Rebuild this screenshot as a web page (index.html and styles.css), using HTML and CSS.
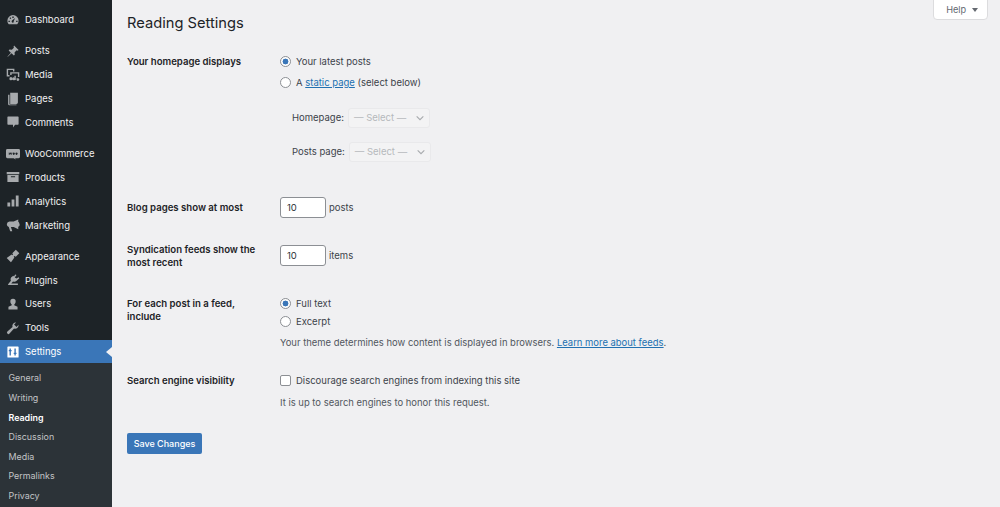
FILE: index.html
```html
<!DOCTYPE html>
<html lang="en">

<head>
    <meta charset="UTF-8">
    <meta name="viewport" content="width=device-width, initial-scale=1.0">
    <title>Reading Settings</title>
    <link rel="stylesheet" href="styles.css">
</head>

<body>
    <aside class="sidebar">
        <ul class="menu">
            <li class="item group"><svg viewBox="0 0 20 20"><path d="M10 3a8 8 0 0 0-8 8c0 2 .7 3.800 2 5.200h12a8 8 0 0 0 2-5.200 8 8 0 0 0-8-8zM9 5h2v2H9zM5 7l1.500-.8 1 1.500L6 8.600zM3.500 11h2v2h-2zm11 0h2v2h-2zM10 14a2 2 0 0 1-1-3.700l4-3.300-2 4.700A2 2 0 0 1 10 14z" fill-rule="evenodd"/></svg>Dashboard</li>

            <li class="item"><svg viewBox="0 0 20 20"><path d="M11.500 2l6.500 6.500-1.500 1-1.300-.5-3 3 .3 3.300-1.300 1.200-3.200-3.200L3 18l-1 .5.500-1 4.500-5-3.200-3.200L5 8l3.300.3 3-3-.5-1.300z"/></svg>Posts</li>
            <li class="item"><svg viewBox="0 0 20 20"><path d="M1 1h11v4h-2V3H3v7h2v2H1zm5 5h13v7h-2V8H8v2H6zm11 8.500a2 2 0 1 1-2 2v-2zM7 13a2.200 2.200 0 1 1-2.200 2.200A2.200 2.200 0 0 1 7 13zm4 4.500a2 2 0 1 1 1-3.700V11h2v6z" fill-rule="evenodd"/></svg>Media</li>
            <li class="item"><svg viewBox="0 0 20 20"><path d="M6 1h11v14a2 2 0 0 1-2 2H6zM3 4h2v14h10v1H5a2 2 0 0 1-2-2z"/></svg>Pages</li>
            <li class="item group"><svg viewBox="0 0 20 20"><path d="M3 2h14a1 1 0 0 1 1 1v10a1 1 0 0 1-1 1h-4l-3 4v-4H3a1 1 0 0 1-1-1V3a1 1 0 0 1 1-1z"/></svg>Comments</li>

            <li class="item"><svg viewBox="0 0 20 20"><path d="M2 3h16a2 2 0 0 1 2 2v9a2 2 0 0 1-2 2h-5l1 2-3-2H2a2 2 0 0 1-2-2V5a2 2 0 0 1 2-2zm2 5v3h1l1-1.500L7 11h1l1-3H8l-.5 1.500L6.500 8h-1l-.6 1.500L4.500 8zm7 0a1.500 1.500 0 1 0 .1 0zm4 0a1.500 1.500 0 1 0 .1 0z" fill-rule="evenodd"/></svg>WooCommerce</li>
            <li class="item"><svg viewBox="0 0 20 20"><path d="M1 3h18v3H1zm1 4h16v10H2zm5 2v1.500h6V9z" fill-rule="evenodd"/></svg>Products</li>
            <li class="item"><svg viewBox="0 0 20 20"><path d="M2 12h4v6H2zm6-4h4v10H8zm6-6h4v16h-4z"/></svg>Analytics</li>
            <li class="item group"><svg viewBox="0 0 20 20"><path d="M19 8a3 3 0 0 0-1.500-2.500V2L11 5H5a4 4 0 0 0-1 7.800L6 19h3l-2-6h4l6.500 3v-3.500A3 3 0 0 0 19 8z"/></svg>Marketing</li>

            <li class="item"><svg viewBox="0 0 20 20"><path d="M14 1l5 5-5 5-2-1-1 1 1 1-4 6-1 1-6-6 1-1 6-4 1 1 1-1-1-2z"/></svg>Appearance</li>
            <li class="item"><svg viewBox="0 0 20 20"><path d="M13 2l2 1-2.500 3.500L15 8l3-2 1 1.500-3 3a5 5 0 0 1-6 1.500l-2.500 3H17v2H3v-1l4-5a5 5 0 0 1 2-6l1.500-1 1 1z"/></svg>Plugins</li>
            <li class="item"><svg viewBox="0 0 20 20"><path d="M10 2.500a3.800 3.800 0 0 1 3.800 4c0 2-1 3.500-2 4.300v1l4.700 2.200V18h-13v-4l4.700-2.200v-1c-1-.8-2-2.300-2-4.300a3.800 3.800 0 0 1 3.800-4z"/></svg>Users</li>
            <li class="item"><svg viewBox="0 0 20 20"><path d="M18 5.500a5 5 0 0 1-6.500 5.200L5 18a2 2 0 0 1-3-3l7.300-6.500A5 5 0 0 1 14.500 2L11.500 5l3.500 3.500z"/></svg>Tools</li>
            <li class="item current"><svg viewBox="0 0 20 20"><path d="M3 2h14a1 1 0 0 1 1 1v14a1 1 0 0 1-1 1H3a1 1 0 0 1-1-1V3a1 1 0 0 1 1-1zm2 3v2H4v2h1v6h2V9h1V7H7V5zm7 0v6h-1v2h1v2h2v-2h1v-2h-1V5z" fill-rule="evenodd"/></svg>Settings</li>
        </ul>
        <ul class="submenu">
            <li>General</li>
            <li>Writing</li>
            <li class="active">Reading</li>
            <li>Discussion</li>
            <li>Media</li>
            <li>Permalinks</li>
            <li>Privacy</li>
        </ul>
    </aside>

    <main class="content">
        <button class="help" type="button">Help <span class="help-arrow"></span></button>
        <h1>Reading Settings</h1>

        <form class="settings">
            <div class="row row-home">
                <div class="label">Your homepage displays</div>
                <div class="field">
                    <label class="check"><input type="radio" name="home" checked>Your latest posts</label>
                    <label class="check"><input type="radio" name="home"><span>A <a href="#">static page</a> (select below)</span></label>
                    <div class="page-select first">
                        <span>Homepage:</span>
                        <div class="select">— Select — <svg viewBox="0 0 12 12"><path d="M2 4l4 4 4-4"/></svg></div>
                    </div>
                    <div class="page-select">
                        <span>Posts page:</span>
                        <div class="select">— Select — <svg viewBox="0 0 12 12"><path d="M2 4l4 4 4-4"/></svg></div>
                    </div>
                </div>
            </div>

            <div class="row row-blog">
                <div class="label">Blog pages show at most</div>
                <div class="field inline"><input class="number" type="text" value="10"> posts</div>
            </div>

            <div class="row row-feeds">
                <div class="label">Syndication feeds show the most recent</div>
                <div class="field inline"><input class="number" type="text" value="10"> items</div>
            </div>

            <div class="row row-include">
                <div class="label">For each post in a feed, include</div>
                <div class="field">
                    <label class="check"><input type="radio" name="feed" checked>Full text</label>
                    <label class="check"><input type="radio" name="feed">Excerpt</label>
                    <p class="note">Your theme determines how content is displayed in browsers. <a href="#">Learn more about feeds</a>.</p>
                </div>
            </div>

            <div class="row row-search">
                <div class="label">Search engine visibility</div>
                <div class="field">
                    <label class="check"><input type="checkbox">Discourage search engines from indexing this site</label>
                    <p class="note">It is up to search engines to honor this request.</p>
                </div>
            </div>

            <button class="save" type="button">Save Changes</button>
        </form>
    </main>
</body>

</html>
```

FILE: styles.css
```css
* {
    box-sizing: border-box;
}

html,
body {
    height: 507px;
    overflow: hidden;
}

body {
    display: flex;
    margin: 0;
    background-color: #f0f0f2;
    color: #3c434a;
    font-family: Inter, "Liberation Sans", sans-serif;
    font-size: 9.5px;
}

a {
    color: #2271b1;
}

.sidebar {
    width: 112px;
    flex-shrink: 0;
    background-color: #1d2327;
    color: #f0f0f1;
}

.menu,
.submenu {
    list-style: none;
    margin: 0;
    padding: 0;
}

.menu {
    padding-top: 7.8px;
}

.item {
    display: flex;
    align-items: center;
    gap: 5px;
    height: 23.8px;
    padding-left: 6px;
}

.item svg {
    width: 14px;
    height: 14px;
    flex-shrink: 0;
    fill: #a7aaad;
}

.item.group {
    margin-bottom: 7.5px;
}

.item.current {
    position: relative;
    background-color: #3a76b8;
    color: #fff;
}

.item.current svg {
    fill: #fff;
}

.item.current::after {
    content: "";
    position: absolute;
    right: 0;
    top: 7px;
    border: 5px solid transparent;
    border-left-width: 0;
    border-right: 6px solid #f0f0f2;
}

.submenu {
    height: 144px;
    padding-top: 4.7px;
    background-color: #2c3338;
    color: #c3c4c7;
    font-size: 8.9px;
}

.submenu li {
    display: flex;
    align-items: center;
    height: 19.6px;
    padding-left: 8.5px;
}

.submenu .active {
    color: #fff;
    font-weight: 600;
}

.content {
    position: relative;
    flex: 1;
    padding: 0 15px;
}

.help {
    position: absolute;
    top: -1px;
    right: 12px;
    width: 55px;
    height: 21px;
    padding: 0 0 0 3px;
    background-color: #fff;
    border: 1px solid #dcdcde;
    border-radius: 0 0 4px 4px;
    color: #646970;
    font: inherit;
    font-size: 9.2px;
}

.help-arrow {
    display: inline-block;
    margin-left: 3px;
    border: 3px solid transparent;
    border-bottom-width: 0;
    border-top: 4px solid #646970;
    vertical-align: 1px;
}

h1 {
    margin: 0;
    padding-top: 13px;
    color: #1d2327;
    font-size: 14.7px;
    font-weight: 400;
    line-height: 21px;
}

.settings {
    padding-top: 18px;
}

.row {
    display: flex;
}

.label {
    width: 153px;
    flex-shrink: 0;
    padding-right: 20px;
    color: #1d2327;
    font-size: 9.6px;
    font-weight: 600;
    line-height: 13px;
}

.field {
    flex: 1;
}

.inline {
    display: flex;
    align-items: center;
    gap: 3px;
    height: 21px;
}

.check {
    display: flex;
    align-items: center;
    gap: 5px;
    height: 18px;
}

.check + .check {
    margin-top: 3px;
}

.check input {
    appearance: none;
    width: 11px;
    height: 11px;
    margin: 0;
    flex-shrink: 0;
    background-color: #fff;
    border: 1px solid #8c8f94;
}

.check input[type="radio"] {
    border-radius: 50%;
}

.check input[type="radio"]:checked {
    background: radial-gradient(circle, #3a76b8 0 2.7px, #fff 3.2px);
}

.check input[type="checkbox"] {
    border-radius: 2px;
}

.page-select {
    display: flex;
    align-items: center;
    gap: 4px;
    height: 21px;
    margin-top: 13px;
    padding-left: 12px;
}

.page-select.first {
    margin-top: 16px;
}

.select {
    display: flex;
    align-items: center;
    justify-content: space-between;
    width: 82px;
    height: 20px;
    padding: 0 4px 0 5px;
    background-color: #f3f3f4;
    border: 1px solid #e9e9eb;
    border-radius: 3px;
    color: #b6b9bc;
}

.select svg {
    width: 10px;
    height: 10px;
    fill: none;
    stroke: #a7aaad;
    stroke-width: 1.3;
}

.number {
    width: 46px;
    height: 21px;
    padding: 0 6px;
    background-color: #fff;
    border: 1px solid #8c8f94;
    border-radius: 3px;
    color: #2c3338;
    font: inherit;
}

.note {
    margin: 0;
    color: #50575e;
    font-size: 9.45px;
}

.row-home .label {
    padding-top: 3px;
}

.row-blog {
    margin-top: 35px;
}

.row-blog .label {
    padding-top: 4px;
}

.row-feeds {
    margin-top: 25px;
}

.row-feeds .field {
    margin-top: 2px;
}

.row-include {
    margin-top: 25px;
}

.row-include .label {
    padding-top: 2.5px;
}

.row-include .check + .check {
    margin-top: 0;
}

.row-include .note {
    margin-top: 6px;
    line-height: 13px;
}

.row-search {
    margin-top: 22px;
}

.row-search .label {
    padding-top: 3px;
}

.row-search .note {
    margin-top: 7px;
    line-height: 13px;
}

.save {
    display: block;
    width: 75px;
    height: 21px;
    margin-top: 24px;
    padding: 0;
    background-color: #3a76b8;
    border: none;
    border-radius: 2px;
    color: #fff;
    font: inherit;
    font-size: 9px;
    font-weight: 500;
}
```
